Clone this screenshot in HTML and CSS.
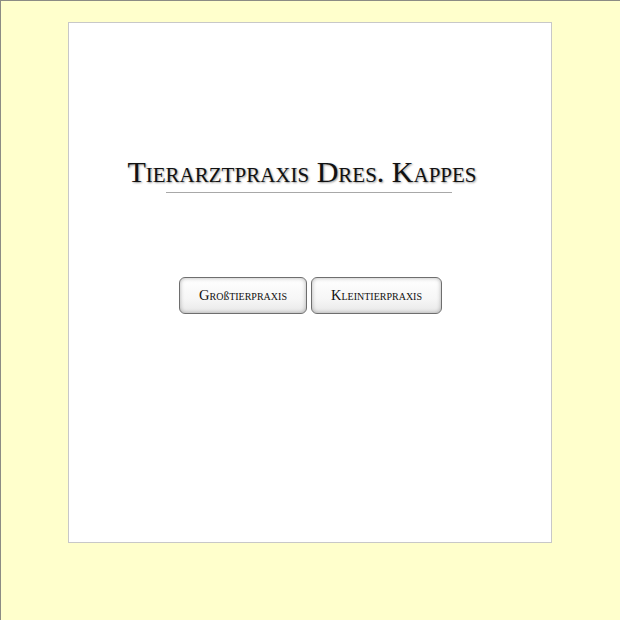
FILE: index.html
```html
<!DOCTYPE html>
<html>
<head>
<meta charset="utf-8">
<link rel="stylesheet" href="styles.css">
</head>
<body>
<div class="page">
  <div class="box">
    <h1 class="title">Tierarztpraxis Dres. Kappes</h1>
    <div class="rule"></div>
    <div class="buttons">
      <button class="btn btn-gross">Gro<span class="eszett">ß</span>tierpraxis</button>
      <button class="btn btn-klein">Kleintierpraxis</button>
    </div>
  </div>
</div>
</body>
</html>
```
FILE: styles.css
```css
html, body {
  margin: 0;
  padding: 0;
}
body {
  background: #ffffcc;
  font-family: "Liberation Serif", "Times New Roman", serif;
}
.page {
  box-sizing: border-box;
  min-height: 620px;
  border-top: 1px solid #8c8c84;
  border-left: 1px solid #8c8c84;
  padding: 21px 0 0 67px;
}
.box {
  box-sizing: border-box;
  width: 484px;
  height: 521px;
  background: #ffffff;
  border: 1px solid #c8c8c8;
  padding-top: 132px;
}
.title {
  margin: 0;
  font-weight: normal;
  font-size: 30px;
  line-height: 34px;
  font-variant: small-caps;
  text-align: center;
  color: #111;
  text-shadow: 1px 1px 2px #999;
  padding-right: 16px;
}
.rule {
  width: 286px;
  height: 1px;
  background: #a8a8a8;
  margin: 3px auto 0;
  position: relative;
  left: -1px;
}
.buttons {
  display: flex;
  justify-content: center;
  gap: 4px;
  margin-top: 84px;
}
.btn {
  box-sizing: border-box;
  height: 37px;
  font-family: "Liberation Serif", "Times New Roman", serif;
  font-variant: small-caps;
  font-size: 14.5px;
  color: #111;
  border: 1px solid #6e6e6e;
  border-radius: 6px;
  background: linear-gradient(#ffffff, #f6f6f6 60%, #e8e8e8);
  box-shadow: inset 0 0 4px rgba(0,0,0,0.3);
  padding: 0 0 0 1px;
}
.eszett {
  font-variant: normal;
  font-size: 11.5px;
}
.btn-gross { width: 128px; }
.btn-klein { width: 131px; }
```
